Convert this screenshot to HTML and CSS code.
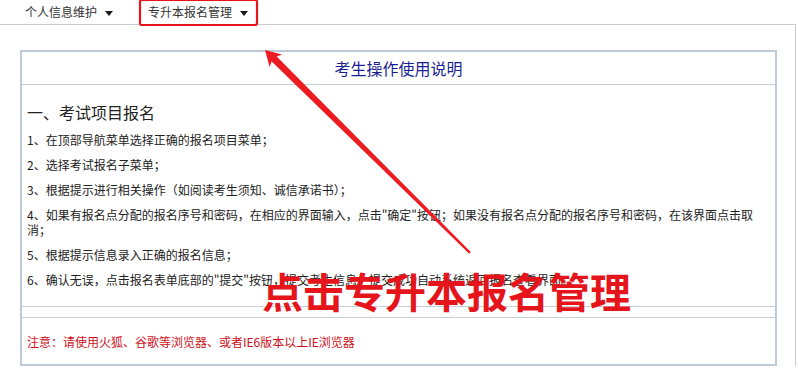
FILE: index.html
```html
<!DOCTYPE html>
<html lang="zh-CN">

<head>
    <meta charset="UTF-8">
    <title>考生操作使用说明</title>
    <link rel="stylesheet" href="styles.css">
</head>

<body>
    <div class="topnav">
        <span class="nav-item">个人信息维护</span>
        <span class="nav-item">专升本报名管理</span>
    </div>

    <div class="panel">
        <div class="guide">
            <div class="guide-title">考生操作使用说明</div>
            <div class="guide-body">
                <h2>一、考试项目报名</h2>
                <p>1、在顶部导航菜单选择正确的报名项目菜单；</p>
                <p>2、选择考试报名子菜单；</p>
                <p>3、根据提示进行相关操作（如阅读考生须知、诚信承诺书）；</p>
                <p>4、如果有报名点分配的报名序号和密码，在相应的界面输入，点击"确定"按钮；如果没有报名点分配的报名序号和密码，在该界面点击取消；</p>
                <p>5、根据提示信息录入正确的报名信息；</p>
                <p>6、确认无误，点击报名表单底部的"提交"按钮，提交考生信息，提交成功自动系统返回报名查看界面。</p>
            </div>
            <div class="guide-gap"></div>
            <div class="guide-note">注意：请使用火狐、谷歌等浏览器、或者IE6版本以上IE浏览器</div>
        </div>
    </div>

    <!-- annotation layer -->
    <svg class="marks" width="798" height="369" viewBox="0 0 798 369">
        <rect x="140" y="0" width="117" height="25" rx="2" fill="none" stroke="#e5151b" stroke-width="2.2"/>
        <polygon fill="#ec1c22" points="265,50 282,54.5 276.7,56.6 470.8,252.1 469.2,253.8 271.7,61.6 269.6,67"/>
    </svg>
    <div class="callout">点击专升本报名管理</div>
</body>

</html>
```

FILE: styles.css
```css
body {
    margin: 0;
    font-family: "Noto Sans CJK SC", "Liberation Sans", sans-serif;
    font-size: 12px;
    color: #222;
    background-color: #fff;
}

.topnav {
    display: flex;
    gap: 35px;
    height: 24px;
    line-height: 24px;
    padding-left: 25px;
    color: #333;
}

.nav-item::after {
    content: "";
    display: inline-block;
    margin-left: 8px;
    vertical-align: middle;
    border-left: 4px solid transparent;
    border-right: 4px solid transparent;
    border-top: 5px solid #1a1a1a;
}

.panel {
    margin-right: 2px;
    border-top: 1px solid #c4ccd6;
    border-right: 1px solid #c4ccd6;
    padding: 25px 18px 0 20px;
}

.guide {
    border: 2px solid #bccad9;
    background-color: #fff;
}

.guide-title {
    height: 32px;
    line-height: 32px;
    text-align: center;
    font-size: 16px;
    color: #1c1f94;
    border-bottom: 1px solid #c6ced8;
}

.guide-body {
    padding: 17px 12px 19px 5px;
    border-bottom: 1px solid #c6ced8;
}

.guide-body h2 {
    margin: 0 0 10px;
    font-size: 16px;
    font-weight: normal;
    line-height: 20px;
}

.guide-body p {
    margin: 0 0 10px;
    line-height: 15px;
}

.guide-body p:last-child {
    margin-bottom: 0;
}

.guide-gap {
    height: 10px;
    border-bottom: 1px solid #c6ced8;
}

.guide-note {
    padding: 16px 5px 15px;
    line-height: 15px;
    color: #d0101a;
}

.marks {
    position: absolute;
    left: 0;
    top: 0;
    pointer-events: none;
}

.callout {
    position: absolute;
    left: 262px;
    top: 270px;
    font-size: 41px;
    line-height: 40px;
    font-weight: 700;
    color: #e5151b;
    white-space: nowrap;
}
```
